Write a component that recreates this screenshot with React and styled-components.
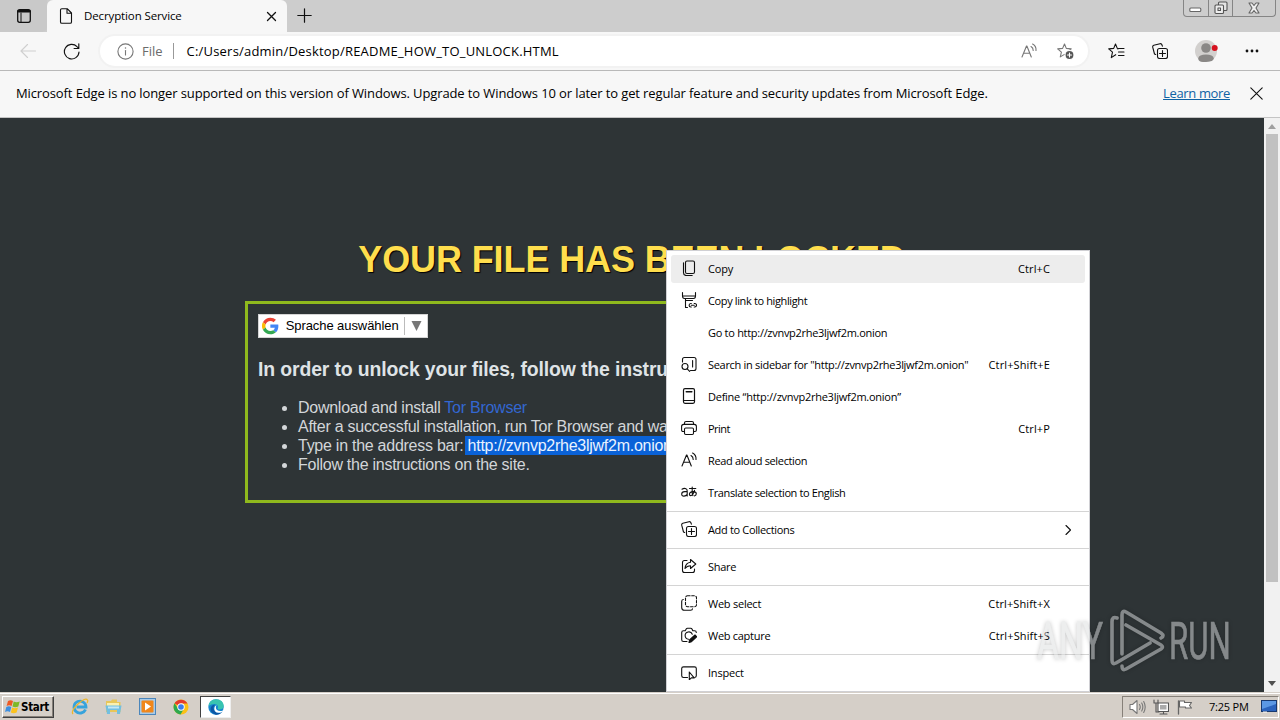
import React from "react";
import styled, { createGlobalStyle, css } from "styled-components";

const Global = createGlobalStyle`
  * { box-sizing: border-box; }
  html, body { margin: 0; height: 100%; overflow: hidden; }
  #root { height: 100%; }
`;

const ui = '"Open Sans", "Noto Sans", sans-serif';

const Desktop = styled.div`
  display: flex;
  flex-direction: column;
  width: 1280px;
  height: 720px;
  position: relative;
  overflow: hidden;
  background: #2e3436;
  font-family: ${ui};
  color: #000;
`;

const Label = styled.span`
  white-space: pre;
  flex: none;
  font-size: ${(p) => p.$size || 11}px;
  letter-spacing: ${(p) => p.$ls || 0}px;
  color: ${(p) => p.$color || "#000"};
  margin-left: ${(p) => p.$ml || 0}px;
  padding-bottom: ${(p) => p.$lift || 0}px;
`;

const TabStrip = styled.div`
  display: flex;
  height: 32px;
  flex: none;
  background: #cdcdcd;
`;
const TabActions = styled.div`
  width: 47px;
  display: flex;
  align-items: center;
  padding-left: 16px;
  background: #c9c9c9;
  border-radius: 0 0 5px 0;
`;
const Tab = styled.div`
  width: 240px;
  display: flex;
  align-items: center;
  padding: 0 10px 0 11px;
  background: #f7f7f7;
  border-radius: 6px 6px 0 0;
`;
const Spacer = styled.div`
  flex: 1;
`;
const NewTab = styled.div`
  display: flex;
  align-items: center;
  padding: 0 0 1px 10px;
`;
const WindowButtons = styled.div`
  display: flex;
  width: 93px;
  height: 17px;
  margin-right: 4px;
  border: 1px solid #858585;
  border-top: 0;
  border-radius: 0 0 4px 4px;
`;
const WindowButton = styled.div`
  width: ${(p) => p.$w}px;
  display: flex;
  align-items: center;
  justify-content: center;
  border-right: ${(p) => (p.$last ? "0" : "1px solid #858585")};
`;

const Toolbar = styled.div`
  display: flex;
  align-items: center;
  flex: none;
  height: 39px;
  background: #f7f7f7;
  border-bottom: 1px solid #b9b9b9;
  padding: 0 20px;
`;
const AddressBar = styled.div`
  display: flex;
  align-items: center;
  width: 988px;
  height: 30px;
  margin-left: 20px;
  padding: 0 14px 0 17px;
  border-radius: 15px;
  background: #fff;
  box-shadow: 0 0 0 2px #f2f2f2;
`;
const Divider = styled.div`
  width: 1px;
  height: 16px;
  background: #999;
  margin: 0 13px 0 10px;
`;
const Tool = styled.div`
  display: flex;
  margin-left: ${(p) => p.$ml || 0}px;
`;

const InfoBar = styled.div`
  display: flex;
  align-items: center;
  flex: none;
  height: 47px;
  padding: 0 17px 1px 16px;
  background: #f7f7f7;
  border-bottom: 1px solid #c4c4c4;
`;
const LearnMore = styled.a`
  font-size: 13px;
  letter-spacing: -0.35px;
  color: #0f62a4;
  text-decoration: underline;
  margin-right: 20px;
  padding-bottom: 1px;
`;

const Viewport = styled.div`
  display: flex;
  flex: 1;
  min-height: 0;
`;
const Page = styled.main`
  flex: 1;
  display: flex;
  flex-direction: column;
  align-items: center;
  background: #2e3436;
  font-family: "Liberation Sans", Arial, sans-serif;
  color: #dfe3e6;
`;
const Title = styled.h1`
  margin: 121px 0 0;
  height: 42px;
  line-height: 42px;
  font-size: 36px;
  letter-spacing: -0.1px;
  white-space: nowrap;
  color: #ffde4d;
  text-shadow: 1px 1px 1px #000;
`;
const Notice = styled.section`
  width: 774px;
  height: 202px;
  margin-top: 20px;
  padding: 10px;
  border: 3px solid #8fb91d;
`;
const Translate = styled.div`
  display: flex;
  align-items: center;
  width: 170px;
  height: 24px;
  padding-left: 3px;
  background: #fff;
  border: 1px solid #d5d5d5;
`;
const TranslateText = styled.span`
  font-size: 13px;
  color: #000;
  letter-spacing: -0.08px;
  flex: none;
  width: 119px;
  margin-left: 7px;
  height: 18px;
  line-height: 18px;
  border-right: 1px solid #bbb;
  white-space: nowrap;
`;
const Subtitle = styled.h3`
  margin: 20px 0 18px;
  line-height: 22px;
  font-size: 19.4px;
  letter-spacing: -0.12px;
  white-space: nowrap;
`;
const List = styled.ul`
  margin: 0;
  padding-left: 40px;
  font-size: 16px;
  line-height: 19px;
  letter-spacing: -0.26px;
  white-space: nowrap;
  color: #d3d6d9;
`;
const Tor = styled.a`
  color: #3367d1;
`;
const Selected = styled.span`
  display: inline-block;
  height: 19px;
  background: #0a62d8;
  color: #e9f2ff;
  padding-left: 3px;
  margin-left: -3px;
`;

const ScrollTrack = styled.div`
  width: 16px;
  display: flex;
  flex-direction: column;
  align-items: center;
  background: #f1f1f1;
`;
const ScrollArrow = styled.div`
  height: 17px;
  display: flex;
  align-items: center;
`;
const Thumb = styled.div`
  width: 12px;
  height: 448px;
  margin-top: -1px;
  background: #c1c1c1;
`;

const Menu = styled.div`
  position: absolute;
  left: 666px;
  top: 250px;
  width: 424px;
  height: 442px;
  display: flex;
  flex-direction: column;
  padding: 2px 4px 0;
  background: #fff;
  border: 1px solid #d0d0d4;
  font-family: ${ui};
`;
const MenuItem = styled.div`
  display: flex;
  align-items: center;
  flex: none;
  height: 28px;
  margin: 2px 0;
  padding: 0 35px 0 10px;
  border-radius: 3px;
  ${(p) => p.$active && css`background: #ededed;`}
`;
const MenuIcon = styled.div`
  display: flex;
  width: 16px;
  height: 18px;
  margin-right: 11px;
  padding-bottom: 2px;
`;
const Separator = styled.div`
  height: 1px;
  flex: none;
  margin: 2px -4px;
  background: #d4d4d4;
`;
const Arrow = styled.div`
  display: flex;
  margin-right: -22px;
`;

const Watermark = styled.div`
  position: absolute;
  left: 1036px;
  top: 608px;
  opacity: 0.5;
  filter: drop-shadow(0 0 2px rgba(0, 0, 0, 0.45));
`;

const Taskbar = styled.div`
  display: flex;
  align-items: center;
  flex: none;
  height: 28px;
  background: #d5cfc8;
  border-top: 1px solid #d5cfc8;
  box-shadow: inset 0 1px 0 #fff;
  padding-left: 2px;
`;
const StartButton = styled.div`
  display: flex;
  align-items: center;
  width: 52px;
  height: 22px;
  padding-left: 2px;
  border: 1px solid;
  border-color: #fff #404040 #404040 #fff;
  box-shadow: inset -1px -1px 0 #868079;
  font: bold 11.5px "DejaVu Sans Condensed", sans-serif;
  letter-spacing: -0.3px;
`;
const Launcher = styled.div`
  display: flex;
  margin-left: ${(p) => p.$ml}px;
`;
const ActiveTask = styled.div`
  display: flex;
  justify-content: center;
  align-items: center;
  width: 31px;
  height: 22px;
  margin-left: 11px;
  background: #fff;
  border: 1px solid;
  border-color: #404040 #eee #eee #404040;
`;
const Tray = styled.div`
  display: flex;
  align-items: center;
  width: 157px;
  height: 22px;
  margin-right: 1px;
  padding-left: 6px;
  border: 1px solid;
  border-color: #868079 #fff #fff #868079;
`;

const Svg = ({ s = 16, w, h, vb, children, c = "#111", sw = 1.1 }) => (
  <svg width={w || s} height={h || s} viewBox={vb || `0 0 ${w || s} ${h || s}`} fill="none" stroke={c} strokeWidth={sw} strokeLinecap="round" strokeLinejoin="round">
    {children}
  </svg>
);

const CollectionsIcon = () => (
  <Svg>
    <rect x="5.5" y="5.5" width="10" height="10" rx="2" />
    <path d="M10.5 7.500v6M7.500 10.500h6" />
    <path d="M3.700 11.500 2.500 11 .7 4.200Q.4 2.700 1.800 2.200L8 .7Q9.500.400 10 2l.4 1.200" />
  </Svg>
);

const ReadAloud = ({ c }) => (
  <Svg c={c}>
    <path d="M1 14 5.500 3h.4L10.300 14M2.600 10.200h6.200" />
    <path d="M10 3.500q2.300 1.200 2.200 4M11.600 1q3.800 2 3.400 6.500" />
  </Svg>
);

const icons = {
  copy: (
    <Svg>
      <rect x="4.500" y="1" width="9" height="12.500" rx="1.500" />
      <path d="M2.500 2.800v10q0 2.700 2.700 2.700h6" />
    </Svg>
  ),
  highlight: (
    <Svg>
      <path d="M1.500.6v3.400q0 2.500 2 2.500h9q2 0 2-2.500V.6M1.500 4h13M4.500 6.500v2h7M4.500 8.500v7h2" />
      <path d="M10.300 11.500H9.800q-1.700.1-1.700 1.700t1.700 1.800h.5M13.200 11.500h.6q1.700.1 1.700 1.700T13.800 15h-.6M10.300 13.250h3" />
    </Svg>
  ),
  sidebar: (
    <Svg>
      <path d="M1.500 6V3.500q0-2 2-2h9.500q2 0 2 2v9q0 2-2 2H9.500M11.600 4.500v6.500" />
      <circle cx="4" cy="10.500" r="3" />
      <path d="m6.200 12.800 2.500 2.500" />
    </Svg>
  ),
  define: (
    <Svg sw={1.2}>
      <rect x="2.500" y=".7" width="11" height="14.600" rx="1.500" />
      <path d="M2.500 12.500h11" />
      <path d="M5.300 3.700h5.500" strokeWidth="1.600" />
    </Svg>
  ),
  print: (
    <Svg>
      <path d="M3.500 11.500H2q-1.400 0-1.400-1.400V6.500Q.6 4.400 2.700 4.400h10.600q2.100 0 2.100 2.100v3.600q0 1.400-1.400 1.400h-1.500" />
      <path d="M3.500 4.400V3q0-1.500 1.500-1.500h6q1.500 0 1.500 1.500v1.400" />
      <rect x="3.500" y="8" width="9" height="6.500" rx="1.200" />
    </Svg>
  ),
  read: <ReadAloud />,
  translate: (
    <Svg>
      <path d="M1 5.200q2-1.400 4-.5 1.200.5 1.200 2.200V12M6.200 7.600H3.700Q.7 7.800.7 10t2.300 2.100q2 0 3.200-1.700" />
      <path d="M8.500 4.500h6.300M11.200 3v5.600q0 1.700.7 3M13.500 6.300q-1.500 5.300-3.800 5.300-1.300 0-1.300-1.300 0-2.400 3.800-2.700 3.100.100 3.100 2.200 0 1.800-2 2.200" />
    </Svg>
  ),
  collections: <CollectionsIcon />,
  share: (
    <Svg>
      <path d="M6 2.500H3.500q-2 0-2 2v8q0 2 2 2h8q2 0 2-2V11" />
      <path d="M9.500 1.500v2.700Q4.500 4.700 4 10.500q2-2.800 5.500-2.800v2.800L14.800 6z" />
    </Svg>
  ),
  select: (
    <Svg>
      <rect x="4.500" y=".7" width="11" height="11" rx="2" strokeDasharray="2.600 1.600" />
      <path d="M2.300 4.500Q.7 4.500.7 6.500v6q0 2.800 2.800 2.800h6q2 0 2-1.600" />
    </Svg>
  ),
  capture: (
    <Svg>
      <path d="M6 14.500H2.500Q.7 14.500 .7 12.700V5.500q0-1.800 1.800-1.800h1.700l1-1.700q.4-.7 1.300-.7h3.200q.9 0 1.300.7l.8 1.700h1.700q1.800 0 1.800 1.800" />
      <path d="M11.300 7.300a3.700 3.700 0 1 0-3.800 5" />
      <path d="m14 8 1.700 1.700-5.200 5L8 15.500l.5-2.500z" fill="#111" />
    </Svg>
  ),
  inspect: (
    <Svg>
      <path d="M6.500 13.500h-4q-1.800 0-1.800-1.700V4.600q0-1.700 1.800-1.700h11q1.800 0 1.800 1.700v7.200q0 1.500-1.600 1.700" />
      <path d="M8.300 8v7.800l2-1.900h2.900z" />
    </Svg>
  ),
};

const groups = [
  [
    { icon: "copy", text: "Copy", keys: "Ctrl+C", ls: -0.2, active: true },
    { icon: "highlight", text: "Copy link to highlight", ls: -0.37 },
    { text: "Go to http://zvnvp2rhe3ljwf2m.onion", ls: -0.29 },
    { icon: "sidebar", text: 'Search in sidebar for "http://zvnvp2rhe3ljwf2m.onion"', ls: -0.3, keys: "Ctrl+Shift+E" },
    { icon: "define", text: "Define “http://zvnvp2rhe3ljwf2m.onion”", ls: -0.26 },
    { icon: "print", text: "Print", ls: -0.55, keys: "Ctrl+P" },
    { icon: "read", text: "Read aloud selection", ls: -0.35 },
    { icon: "translate", text: "Translate selection to English", ls: -0.38 },
  ],
  [{ icon: "collections", text: "Add to Collections", ls: -0.34, arrow: true }],
  [{ icon: "share", text: "Share", ls: -0.3 }],
  [
    { icon: "select", text: "Web select", ls: -0.24, keys: "Ctrl+Shift+X" },
    { icon: "capture", text: "Web capture", ls: -0.28, keys: "Ctrl+Shift+S" },
  ],
  [{ icon: "inspect", text: "Inspect", ls: -0.2 }],
];

const ContextMenu = () => (
  <Menu>
    {groups.map((items, g) => (
      <React.Fragment key={g}>
        {g > 0 && <Separator />}
        {items.map((it) => (
          <MenuItem key={it.text} $active={it.active}>
            <MenuIcon>{icons[it.icon]}</MenuIcon>
            <Label $ls={it.ls} $lift={1}>{it.text}</Label>
            <Spacer />
            {it.keys && <Label $ls={0.12} $lift={1}>{it.keys}</Label>}
            {it.arrow && (
              <Arrow>
                <Svg w={7} h={12}><path d="M1 1.500l4.500 4.500L1 10.500" /></Svg>
              </Arrow>
            )}
          </MenuItem>
        ))}
      </React.Fragment>
    ))}
  </Menu>
);

const star = "M7.500 1 9.300 5.400l4.900.5-3.700 3.200 1.100 4.800-4.100-2.500-4.200 2.500 1.100-4.800L.7 5.900l4.900-.5z";

export default function App() {
  return (
    <Desktop>
      <Global />
      <TabStrip>
        <TabActions>
          <Svg sw={1.3}>
            <rect x="1.700" y="1.700" width="12.600" height="12.600" rx="2" />
            <path d="M2.500 3.200h11" strokeWidth="2.600" />
            <path d="M5 5v9" strokeWidth="1" />
          </Svg>
        </TabActions>
        <Tab>
          <Svg>
            <path d="M2.500 2q0-1.300 1.300-1.300h5.400l4.300 4.300v9q0 1.300-1.300 1.300H3.800q-1.300 0-1.300-1.300zM9 .8V5.200h4.400" />
          </Svg>
          <Label $size={11.5} $ml={10} $ls={-0.12} $lift={1}>Decryption Service</Label>
          <Spacer />
          <Svg s={11} sw={1.3}><path d="M1.500 1.500l8 8M9.500 1.500l-8 8" /></Svg>
        </Tab>
        <NewTab><Svg s={15} sw={1.2}><path d="M7.500.8v13.400M.8 7.500h13.400" /></Svg></NewTab>
        <Spacer />
        <WindowButtons>
          <WindowButton $w={25}><Svg w={13} h={14} c="#666"><rect x=".8" y="7" width="11" height="3.500" rx="1" fill="#fff" /></Svg></WindowButton>
          <WindowButton $w={25}>
            <Svg w={14} h={14} c="#555"><rect x="4.500" y="1" width="8.500" height="8.500" rx="1" fill="#e4e4e4" /><rect x="1" y="4" width="8.500" height="8.500" rx="1" fill="#eee" /><rect x="4" y="7" width="2.500" height="2.500" /></Svg>
          </WindowButton>
          <WindowButton $w={42} $last>
            <Svg w={12} h={12} c="#666"><path d="M1 1h3l2 2.500L8 1h3L8 6l3 5H8L6 8.500 4 11H1l3-5z" fill="#eee" /></Svg>
          </WindowButton>
        </WindowButtons>
      </TabStrip>
      <Toolbar>
        <Svg w={16} h={16} c="#cfcfcf"><path d="M15.500 8H1M7.500 1.500 1 8l6.500 6.500" /></Svg>
        <Tool $ml={27}>
          <Svg w={17} h={17} sw={1.15}><path d="M16 9A7.300 7.300 0 1 1 14 3.600L15.700 5.300M15.800.8v4.700h-4.700" /></Svg>
        </Tool>
        <AddressBar>
          <Svg s={17} c="#777"><circle cx="8.500" cy="8.500" r="7.600" /><path d="M8.500 7.500v4.500" /><path d="M8.500 4.900v.2" strokeWidth="1.500" /></Svg>
          <Label $size={13} $color="#6b6b6b" $ml={8}>File</Label>
          <Divider />
          <Label $size={13} $ls={0.2}>C:/Users/admin/Desktop/README_HOW_TO_UNLOCK.HTML</Label>
          <Spacer />
          <ReadAloud c="#777" />
          <Tool $ml={20}>
            <Svg w={17} h={17} c="#777"><path d={star} /><circle cx="12.500" cy="12" r="4.500" fill="#555" stroke="#fff" /><path d="M12.500 10v4M10.500 12h4" stroke="#fff" /></Svg>
          </Tool>
        </AddressBar>
        <Tool $ml={20}>
          <Svg w={17} h={16}><path d="M10 6 9.300 5.400 7.500 1 5.700 5.400l-5 .5 3.800 3.200-1.200 5.500 4.400-2.900M10.500 5.500h5.500M10.500 9h5.500M10.500 12.500h5.500" /></Svg>
        </Tool>
        <Tool $ml={27}><CollectionsIcon /></Tool>
        <Tool $ml={27}>
          <svg width="24" height="22" viewBox="0 0 24 22"><circle cx="11" cy="11" r="11" fill="#d2d0ce" /><circle cx="11" cy="8" r="4.800" fill="#8a8886" /><path d="M3.300 18Q4 14.500 11 14.500T18.700 18 11 22 3.300 18" fill="#8a8886" /><circle cx="19.700" cy="8" r="3" fill="#d6121f" /></svg>
        </Tool>
        <Tool $ml={26}><svg width="14" height="4"><g fill="#111"><circle cx="2" cy="2" r="1.400" /><circle cx="7" cy="2" r="1.400" /><circle cx="12" cy="2" r="1.400" /></g></svg></Tool>
      </Toolbar>
      <InfoBar>
        <Label $size={13} $ls={-0.11} $lift={1}>Microsoft Edge is no longer supported on this version of Windows. Upgrade to Windows 10 or later to get regular feature and security updates from Microsoft Edge.</Label>
        <Spacer />
        <LearnMore>Learn more</LearnMore>
        <Svg s={13}><path d="M.8.8l11.400 11.400M12.200.8.8 12.200" /></Svg>
      </InfoBar>
      <Viewport>
        <Page>
          <Title>YOUR FILE HAS BEEN LOCKED</Title>
          <Notice>
            <Translate>
              <svg width="18" height="18" viewBox="0 0 48 48"><path fill="#ea4335" d="M24 9.500c3.500 0 6.700 1.200 9.200 3.600l6.900-6.900C35.900 2.400 30.500 0 24 0 14.600 0 6.500 5.400 2.600 13.200l8 6.200C12.400 13.700 17.700 9.500 24 9.500z" /><path fill="#4285f4" d="M47 24.600c0-1.600-.2-3.100-.4-4.600H24v9h12.900c-.6 3-2.200 5.500-4.700 7.200l7.700 6C44.400 38 47 31.800 47 24.600z" /><path fill="#fbbc05" d="M10.500 28.600a14.500 14.500 0 0 1 0-9.200l-8-6.200a24 24 0 0 0 0 21.600z" /><path fill="#34a853" d="M24 48c6.500 0 11.900-2.100 15.900-5.800l-7.700-6c-2.200 1.500-4.900 2.300-8.200 2.300-6.300 0-11.600-4.200-13.500-9.900l-8 6.200C6.500 42.600 14.600 48 24 48z" /></svg>
              <TranslateText>Sprache auswählen</TranslateText>
              <svg width="24" height="10"><path d="M6.500 0h10l-5 10z" fill="#777" /></svg>
            </Translate>
            <Subtitle>In order to unlock your files, follow the instructions below:</Subtitle>
            <List>
              <li>Download and install <Tor>Tor Browser</Tor></li>
              <li>After a successful installation, run Tor Browser and wait for initialization.</li>
              <li>Type in the address bar: <Selected>http://zvnvp2rhe3ljwf2m.onion</Selected></li>
              <li>Follow the instructions on the site.</li>
            </List>
          </Notice>
        </Page>
        <ScrollTrack>
          <ScrollArrow><svg width="8" height="5"><path d="M0 5 4 0l4 5z" fill="#a0a0a0" /></svg></ScrollArrow>
          <Thumb />
          <Spacer />
          <ScrollArrow><svg width="8" height="5"><path d="M0 0h8L4 5z" fill="#505050" /></svg></ScrollArrow>
        </ScrollTrack>
      </Viewport>
      <Taskbar>
        <StartButton>
          <svg width="16" height="16" viewBox="0 0 16 16"><path d="M3 2q2.500-1.500 5 0L6.600 7q-2.500-1.500-5 0z" fill="#ee5a24" /><path d="M8.700 2.500q2.500 1.600 6 0L13.300 7.500q-3 1.600-5.800 0z" fill="#7db928" /><path d="M1.300 8q2.500-1.500 5 0L5 13q-2.500-1.600-5 0z" fill="#3d8fe0" /><path d="M7.200 8.500q2.500 1.600 5.800 0l-1.400 5q-3 1.600-5.800 0z" fill="#fbc21d" /></svg>
          Start
        </StartButton>
        <Launcher $ml={17}>
          <svg width="18" height="18" viewBox="0 0 18 18" fill="none"><path d="M14.500 11.500A6 6 0 1 1 15 9H5.500" stroke="#36a3dc" strokeWidth="2.800" /><path d="M2 16Q-.5 13 7 6t9.500-4q.7 1-.5 3" stroke="#eeb62b" strokeWidth="1.300" /></svg>
        </Launcher>
        <Launcher $ml={16}>
          <svg width="17" height="17" viewBox="0 0 17 17"><path d="M1 3h5l1-1.500h5V4h3.500v10H1z" fill="#e8c659" /><path d="M2 5h12v4H2z" fill="#fbf0b0" /><path d="M.5 7.500h16L15 16h-3v-4H5v4H2z" fill="#72bfe0" /><path d="M3 8.500h11v2H3z" fill="#c4e7f5" /></svg>
        </Launcher>
        <Launcher $ml={17}>
          <svg width="17" height="17" viewBox="0 0 17 17"><rect x=".5" y=".5" width="16" height="16" fill="#a9cbe8" stroke="#4b86bb" /><rect x="2.500" y="2.500" width="12" height="12" rx="1" fill="#f0871b" /><path d="M6 4.500v8l6-4z" fill="#fff" /></svg>
        </Launcher>
        <Launcher $ml={17}>
          <svg width="16" height="16" viewBox="0 0 16 16"><circle cx="8" cy="8" r="7.500" fill="#fbc116" /><path d="M8 8 1.500 4.300A7.500 7.500 0 0 1 14.500 4.500H8z" fill="#e33b2e" /><path d="M1.500 4.300A7.500 7.500 0 0 0 7.500 15.500L10.800 10 8 8 5 9.500z" fill="#2da94f" /><circle cx="8" cy="8" r="3.700" fill="#fff" /><circle cx="8" cy="8" r="2.800" fill="#3b7ded" /></svg>
        </Launcher>
        <ActiveTask>
          <svg width="16" height="16" viewBox="0 0 16 16"><circle cx="8" cy="8" r="7.700" fill="#1686cf" /><path d="M.5 7Q1.500.300 8 .3q7.200.2 7.700 6.500 0 3.500-4 3.600-2.200 0-2-1 1-2.500-1.200-3.800Q5 4 .5 7z" fill="#38c4b0" /><path d="M7 5.500Q4 9 7 12.500q3 2.500 7.300.5-3 3.500-7.300 2.400Q1 13 3 8q1.300-2.500 4-2.500z" fill="#0c56a5" /><path d="M8.500 6Q7 9 9 11q2.500 1.800 6 .4-1 1.500-2 2-4 1.200-6-1.200Q5 8.500 8.500 6z" fill="#fff" /></svg>
        </ActiveTask>
        <Spacer />
        <Tray>
          <Svg w={17} h={16} c="#777" sw={1.1}><path d="M1 5.500h2.500L8 1.500v13l-4.500-4H1z" fill="#fff" /><path d="M10.500 5.500q1.500 2.500 0 5M12.700 4q2.300 4 0 8M14.700 2.500q3 5.500 0 11" /></Svg>
          <Launcher $ml={7}>
            <Svg w={16} h={16} c="#555"><rect x="5" y="4" width="10.500" height="8.500" fill="#fff" /><rect x="7" y="6" width="6.500" height="4.500" fill="#aaa" stroke="none" /><path d="M7 15h7M10.500 12.500V15M1 1v3h4V1M3 4v9h3" /></Svg>
          </Launcher>
          <Launcher $ml={7}>
            <Svg w={17} h={16} c="#666"><path d="M2.500 2v13" strokeWidth="1.300" /><path d="M3.500 2h5v1.500h7l-2 3 2 2.500h-6V8h-6z" fill="#fff" /></Svg>
          </Launcher>
          <Label $size={11} $ml={16} $ls={-0.2}>7:25 PM</Label>
          <Launcher $ml={12}>
            <svg width="16" height="13"><rect x=".5" y=".5" width="15" height="11" fill="#2a63bd" stroke="#17396f" /><path d="M1 1h14v3L1 9z" fill="#5b98e4" /><path d="M2 12h4" stroke="#fff" /></svg>
          </Launcher>
        </Tray>
      </Taskbar>
      <ContextMenu />
      <Watermark>
        <svg width="200" height="68" viewBox="0 0 200 68" fill="none" stroke="#dcdedf">
          <g fill="#dcdedf" strokeWidth=".7" fontFamily="Roboto, sans-serif" fontSize="52">
            <text transform="translate(1 51) scale(.65 1)">ANY</text>
            <text transform="translate(133 51) scale(.6 1)">RUN</text>
          </g>
          <path d="M86 46V7q0-5 4-3l35 21q4 3 0 5M90 17l35 20q3 2 0 4L90 61q-4 2-4-3M81 10q-5-2-5 4v38q0 5 4 3l34-20" strokeWidth="3.600" strokeLinecap="round" strokeLinejoin="round" />
        </svg>
      </Watermark>
    </Desktop>
  );
}
